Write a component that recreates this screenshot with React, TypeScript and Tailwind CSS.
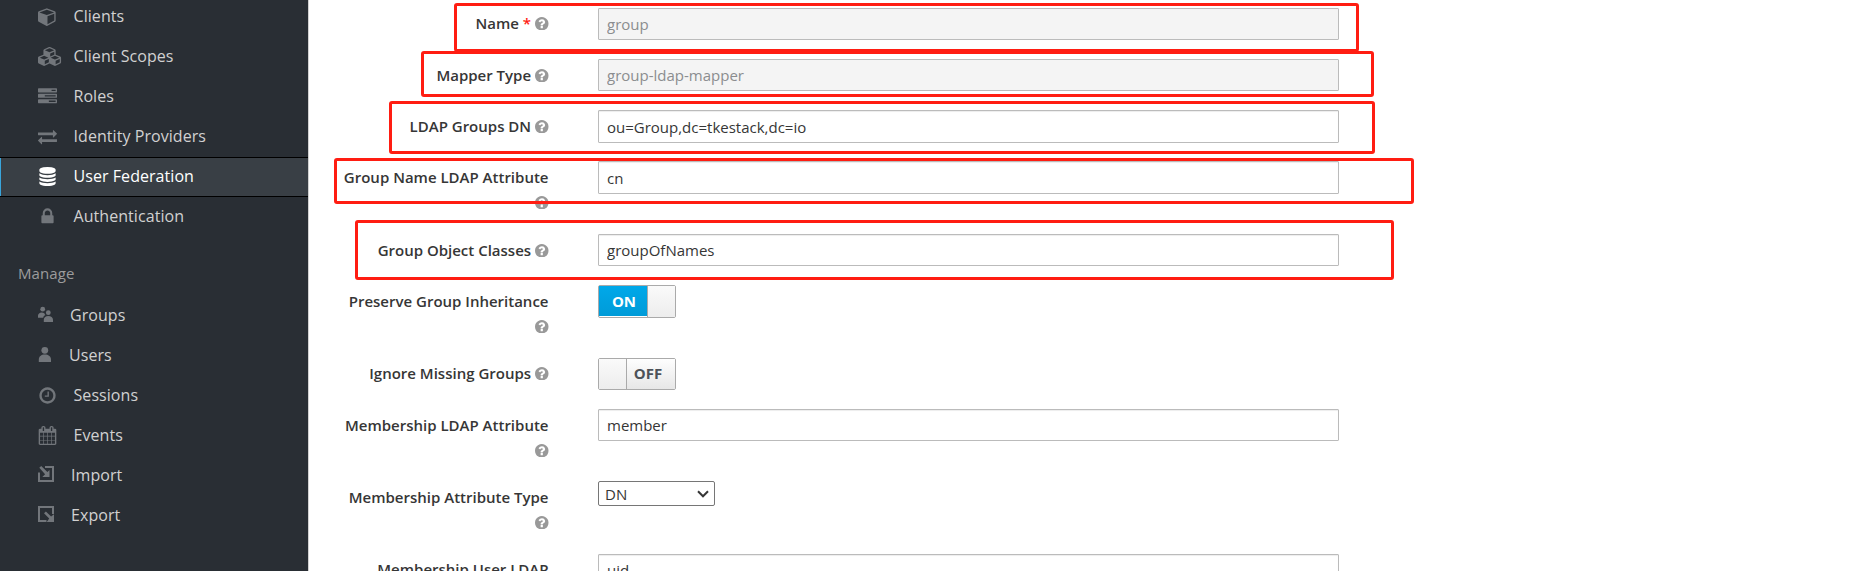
import type { ReactNode } from "react";

const UNIT = "translate(0 2) scale(0.0106)";

const glyphs = {
  cube: "M896 1629l640-349v-636l-640 233v752zm-64-865l698-254-698-254-698 254zm832-252v768q0 35-18 65t-49 47l-704 384q-28 16-61 16t-61-16l-704-384q-31-17-49-47t-18-65v-768q0-40 23-73t61-47l704-256q22-8 44-8t44 8l704 256q38 14 61 47t23 73z",
  cubes:
    "M640 1632l384-192v-314l-384 164v342zm-64-454l404-173-404-173-404 173zm1088 454l384-192v-314l-384 164v342zm-64-454l404-173-404-173-404 173zm-448-293l384-165v-266l-384 164v267zm-64-379l441-189-441-189-441 189zm1088 518v416q0 36-19 67t-52 47l-448 224q-25 14-57 14t-57-14l-448-224q-5-2-7-4-2 2-7 4l-448 224q-25 14-57 14t-57-14l-448-224q-33-16-52-47t-19-67v-416q0-38 21.5-70t56.5-48l434-186v-400q0-38 21.5-70t56.5-48l448-192q23-10 50-10t50 10l448 192q35 16 56.5 48t21.5 70v400l434 186q36 16 57 48t21 70z",
  tasks:
    "M1024 1408h640v-128h-640v128zm-384-512h1024v-128h-1024v128zm640-512h384v-128h-384v128zm512 832v256q0 26-19 45t-45 19h-1664q-26 0-45-19t-19-45v-256q0-26 19-45t45-19h1664q26 0 45 19t19 45zm0-512v256q0 26-19 45t-45 19h-1664q-26 0-45-19t-19-45v-256q0-26 19-45t45-19h1664q26 0 45 19t19 45zm0-512v256q0 26-19 45t-45 19h-1664q-26 0-45-19t-19-45v-256q0-26 19-45t45-19h1664q26 0 45 19t19 45z",
  exchange:
    "M1792 1184v192q0 13-9.5 22.5t-22.5 9.5h-1376v192q0 13-9.5 22.5t-22.5 9.5q-12 0-24-10l-319-320q-9-9-9-22 0-14 9-23l320-320q9-9 23-9 13 0 22.5 9.5t9.5 22.5v192h1376q13 0 22.5 9.5t9.5 22.5zm0-544q0 14-9 23l-320 320q-9 9-23 9-13 0-22.5-9.5t-9.5-22.5v-192h-1376q-13 0-22.5-9.5t-9.5-22.5v-192q0-13 9.5-22.5t22.5-9.5h1376v-192q0-14 9-23t23-9q12 0 24 10l319 319q9 9 9 23z",
  database:
    "M896 768q237 0 443-43t325-127v170q0 69-103 128t-280 93.5-385 34.5-385-34.5-280-93.5-103-128v-170q119 84 325 127t443 43zm0 768q237 0 443-43t325-127v170q0 69-103 128t-280 93.5-385 34.5-385-34.5-280-93.5-103-128v-170q119 84 325 127t443 43zm0-384q237 0 443-43t325-127v170q0 69-103 128t-280 93.5-385 34.5-385-34.5-280-93.5-103-128v-170q119 84 325 127t443 43zm0-1152q208 0 385 34.5t280 93.5 103 128v128q0 69-103 128t-280 93.5-385 34.5-385-34.5-280-93.5-103-128v-128q0-69 103-128t280-93.5 385-34.5z",
  lock: "M640 768h512v-192q0-106-75-181t-181-75-181 75-75 181v192zm832 96v576q0 40-28 68t-68 28h-960q-40 0-68-28t-28-68v-576q0-40 28-68t68-28h32v-192q0-184 132-316t316-132 316 132 132 316v192h32q40 0 68 28t28 68z",
  clock:
    "M1024 544v448q0 14-9 23t-23 9h-320q-14 0-23-9t-9-23v-64q0-14 9-23t23-9h224v-352q0-14 9-23t23-9h64q14 0 23 9t9 23zm416 352q0-148-73-273t-198-198-273-73-273 73-198 198-73 273 73 273 198 198 273 73 273-73 198-198 73-273zm224 0q0 209-103 385.5t-279.5 279.5-385.5 103-385.5-103-279.5-279.5-103-385.5 103-385.5 279.5-279.5 385.5-103 385.5 103 279.5 279.5 103 385.5z",
  calendar:
    "M192 1664h288v-288h-288v288zm352 0h320v-288h-320v288zm-352-352h288v-320h-288v320zm352 0h320v-320h-320v320zm-352-384h288v-288h-288v288zm736 736h320v-288h-320v288zm-384-736h320v-288h-320v288zm768 736h288v-288h-288v288zm-384-352h320v-320h-320v320zm-352-864v-288q0-13-9.5-22.5t-22.5-9.5h-64q-13 0-22.5 9.5t-9.5 22.5v288q0 13 9.5 22.5t22.5 9.5h64q13 0 22.5-9.5t9.5-22.5zm736 864h288v-320h-288v320zm-384-384h320v-288h-320v288zm384 0h288v-288h-288v288zm32-480v-288q0-13-9.5-22.5t-22.5-9.5h-64q-13 0-22.5 9.5t-9.5 22.5v288q0 13 9.5 22.5t22.5 9.5h64q13 0 22.5-9.5t9.5-22.5zm384-64v1280q0 52-38 90t-90 38h-1408q-52 0-90-38t-38-90v-1280q0-52 38-90t90-38h128v-96q0-66 47-113t113-47h64q66 0 113 47t47 113v96h384v-96q0-66 47-113t113-47h64q66 0 113 47t47 113v96h128q52 0 90 38t38 90z",
};

const help =
  "M1024 1376v-192q0-14-9-23t-23-9h-192q-14 0-23 9t-9 23v192q0 14 9 23t23 9h192q14 0 23-9t9-23zm256-672q0-88-55.5-163t-138.5-116-170-41q-243 0-371 213-15 24 8 42l132 100q7 6 19 6 16 0 25-12 53-68 86-92 34-24 86-24 48 0 85.5 26t37.5 59q0 38-20 61t-68 45q-63 28-115.5 86.5t-52.5 125.5v36q0 14 9 23t23 9h192q14 0 23-9t9-23q0-19 21.5-49.5t54.5-49.5q32-18 49-28.5t46-35 44.5-48 28-60.5 12.5-81zm384 192q0 209-103 385.5t-279.5 279.5-385.5 103-385.5-103-279.5-279.5-103-385.5 103-385.5 279.5-279.5 385.5-103 385.5 103 279.5 279.5 103 385.5z";

const glyph = (name: keyof typeof glyphs) => <path transform={UNIT} d={glyphs[name]} />;

const groupsIcon = (
  <g>
    <circle cx="4.7" cy="5.2" r="2.4" />
    <path d="M0 13.8v-2.2c0-1.9 1.6-3.2 3.6-3.2 1.1 0 2 .3 2.7.8.2.8.6 1.4 1.1 1.9-1.1.5-1.9 1.4-2.2 2.7z" />
    <circle cx="10.3" cy="8.7" r="2.4" />
    <path d="M5.8 18v-2.2c0-2.3 1.9-3.9 4.5-3.9s4.7 1.6 4.7 3.9V18z" />
  </g>
);
const userIcon = (
  <g>
    <circle cx="6.8" cy="6.3" r="3.4" />
    <path d="M.8 18v-2.4c0-3 2.4-5 6-5s6.2 2 6.2 5V18z" />
  </g>
);
const importIcon = (
  <g>
    <path d="M7 2H16v16H0V8.500h2V16h12V4H7z" />
    <path d="M1.300 3.700L3.200 1.900l6.200 6.100 2.100-2.100v7.200H4.300l2.800-2.800z" />
  </g>
);
const exportIcon = (
  <g>
    <path d="M0 2h16v8h-2V4H2v12h6.500v2H0z" />
    <path d="M6 9.300l1.900-1.900 5.200 5.200 2.900-2.400V18H8.700l2.500-3.500z" />
  </g>
);

type Item = { label: string; icon: ReactNode; indent: string; active?: boolean };

const configure: Item[] = [
  { label: "Clients", icon: glyph("cube"), indent: "ml-[11.5px]" },
  { label: "Client Scopes", icon: glyph("cubes"), indent: "ml-[11.5px]" },
  { label: "Roles", icon: glyph("tasks"), indent: "ml-[11.5px]" },
  { label: "Identity Providers", icon: glyph("exchange"), indent: "ml-[11.5px]" },
  { label: "User Federation", icon: glyph("database"), indent: "ml-[11.5px]", active: true },
  { label: "Authentication", icon: glyph("lock"), indent: "ml-[11.5px]" },
];

const manage: Item[] = [
  { label: "Groups", icon: groupsIcon, indent: "ml-2" },
  { label: "Users", icon: userIcon, indent: "ml-[7px]" },
  { label: "Sessions", icon: glyph("clock"), indent: "ml-[11.5px]" },
  { label: "Events", icon: glyph("calendar"), indent: "ml-[11.5px]" },
  { label: "Import", icon: importIcon, indent: "ml-[9px]" },
  { label: "Export", icon: exportIcon, indent: "ml-[9px]" },
];

function NavItem({ item }: { item: Item }) {
  return (
    <li
      className={
        item.active
          ? "flex h-10 items-center border-y border-black bg-[#393f45] text-white shadow-[inset_1px_0_0_#39a5dc]"
          : "flex h-10 items-center text-[#d1d1d1]"
      }
    >
      <svg
        viewBox="0 0 24 24"
        className={item.active ? "ml-[38px] size-6 fill-white" : "ml-[38px] size-6 fill-[#72767b]"}
      >
        {item.icon}
      </svg>
      <span className={`${item.indent} -mt-0.5 text-[16px] leading-6 tracking-[0.06px]`}>
        {item.label}
      </span>
    </li>
  );
}

function Row({
  label,
  height,
  required,
  labelPad = "pt-1",
  children,
}: {
  label: string;
  height: string;
  required?: boolean;
  labelPad?: string;
  children: ReactNode;
}) {
  return (
    <div className={`flex shrink-0 ${height}`}>
      <div
        className={`w-[208.5px] shrink-0 text-right text-[15px] leading-[25px] font-semibold text-[#363636] ${labelPad}`}
      >
        {label}
        {required && <span className="text-[#ff1d12]"> *</span>}{" "}
        <svg
          viewBox="128 128 1536 1536"
          className="inline-block size-[13.5px] fill-[#999999] align-[-1px]"
        >
          <path d={help} />
        </svg>
      </div>
      <div className="ml-[49.5px]">{children}</div>
    </div>
  );
}

function TextField({ value, disabled, tall }: { value: string; disabled?: boolean; tall?: boolean }) {
  return (
    <input
      readOnly
      disabled={disabled}
      value={value}
      className={`block w-[741px] rounded-[1px] border border-[#bbbbbb] px-2 text-[15px] outline-none ${
        tall ? "h-[33px]" : "h-8"
      } ${
        disabled
          ? "bg-[#f4f4f4] text-[#8b8d8f]"
          : "bg-white text-[#363636] shadow-[inset_0_1px_1px_rgba(3,3,3,0.075)]"
      }`}
    />
  );
}

function Toggle({ on }: { on?: boolean }) {
  return on ? (
    <div className="flex h-[33px] w-[78px] rounded-[2px] border border-[#aaaaaa] text-[15px] font-bold">
      <span className="mb-px flex w-[48px] items-center justify-center bg-linear-to-b from-[#00a8e9] to-[#009bd8] pl-0.5 text-white">
        ON
      </span>
      <span className="flex-1 border-l border-[#aaaaaa] bg-linear-to-b from-[#fafafa] to-[#ededed]" />
    </div>
  ) : (
    <div className="flex h-8 w-[78px] rounded-[2px] border border-[#aaaaaa] text-[15px] font-bold">
      <span className="w-7 border-r border-[#aaaaaa] bg-linear-to-b from-[#fafafa] to-[#ededed]" />
      <span className="flex flex-1 items-center justify-center bg-linear-to-b from-[#fefefe] to-[#e7e7e7] pr-1.5 pb-px text-[#4d5258]">
        OFF
      </span>
    </div>
  );
}

const outline = "pointer-events-none absolute rounded-[3px] border-3 border-[#ff1d12]";

export default function App() {
  return (
    <div className="relative flex h-[571px] w-[1853px] overflow-hidden bg-white font-['Open_Sans',sans-serif]">
      <nav className="h-full w-[309px] shrink-0 border-r border-[#d1d1d1] bg-[#292e34]">
        <ul className="-mt-[3px]">
          {configure.map((item) => (
            <NavItem key={item.label} item={item} />
          ))}
        </ul>
        <h2 className="h-[59px] pt-[24px] pl-[18px] text-[15px] leading-6 tracking-[0.1px] text-[#9c9c9c]">
          Manage
        </h2>
        <ul>
          {manage.map((item) => (
            <NavItem key={item.label} item={item} />
          ))}
        </ul>
      </nav>

      <main className="flex flex-col pt-2 pl-[31px]">
        <Row label="Name" required height="h-[51px]" labelPad="pt-[3px]">
          <TextField value="group" disabled />
        </Row>
        <Row label="Mapper Type" height="h-[51px]">
          <TextField value="group-ldap-mapper" disabled />
        </Row>
        <Row label="LDAP Groups DN" height="h-[51px]">
          <TextField value="ou=Group,dc=tkestack,dc=io" tall />
        </Row>
        <Row label="Group Name LDAP Attribute" height="h-[73px]">
          <TextField value="cn" tall />
        </Row>
        <Row label="Group Object Classes" height="h-[51px]">
          <TextField value="groupOfNames" />
        </Row>
        <Row label="Preserve Group Inheritance" height="h-[73px]">
          <Toggle on />
        </Row>
        <Row label="Ignore Missing Groups" height="h-[51px]" labelPad="pt-[3px]">
          <Toggle />
        </Row>
        <Row label="Membership LDAP Attribute" height="h-[72px]">
          <TextField value="member" />
        </Row>
        <Row label="Membership Attribute Type" height="h-[73px]">
          <div className="flex h-[25px] w-[117px] items-center justify-between rounded-[2px] border border-[#767676] pr-[5px] pl-1.5 text-[15px] text-[#363636]">
            <span className="pt-0.5">DN</span>
            <svg viewBox="0 0 12 8" className="h-2 w-3 fill-none stroke-[#363636] stroke-2">
              <path d="M1 1.300l5 5 5-5" />
            </svg>
          </div>
        </Row>
        <Row label="Membership User LDAP Attribute" height="h-[73px]" labelPad="pt-[3px]">
          <TextField value="uid" />
        </Row>
      </main>

      <div className={`${outline} top-[3px] left-[454px] h-[49px] w-[905px]`} />
      <div className={`${outline} top-[51px] left-[421px] h-[46px] w-[953px]`} />
      <div className={`${outline} top-[101px] left-[389px] h-[53px] w-[986px]`} />
      <div className={`${outline} top-[158px] left-[334px] h-[46px] w-[1080px]`} />
      <div className={`${outline} top-[220px] left-[355px] h-[60px] w-[1039px]`} />
    </div>
  );
}
